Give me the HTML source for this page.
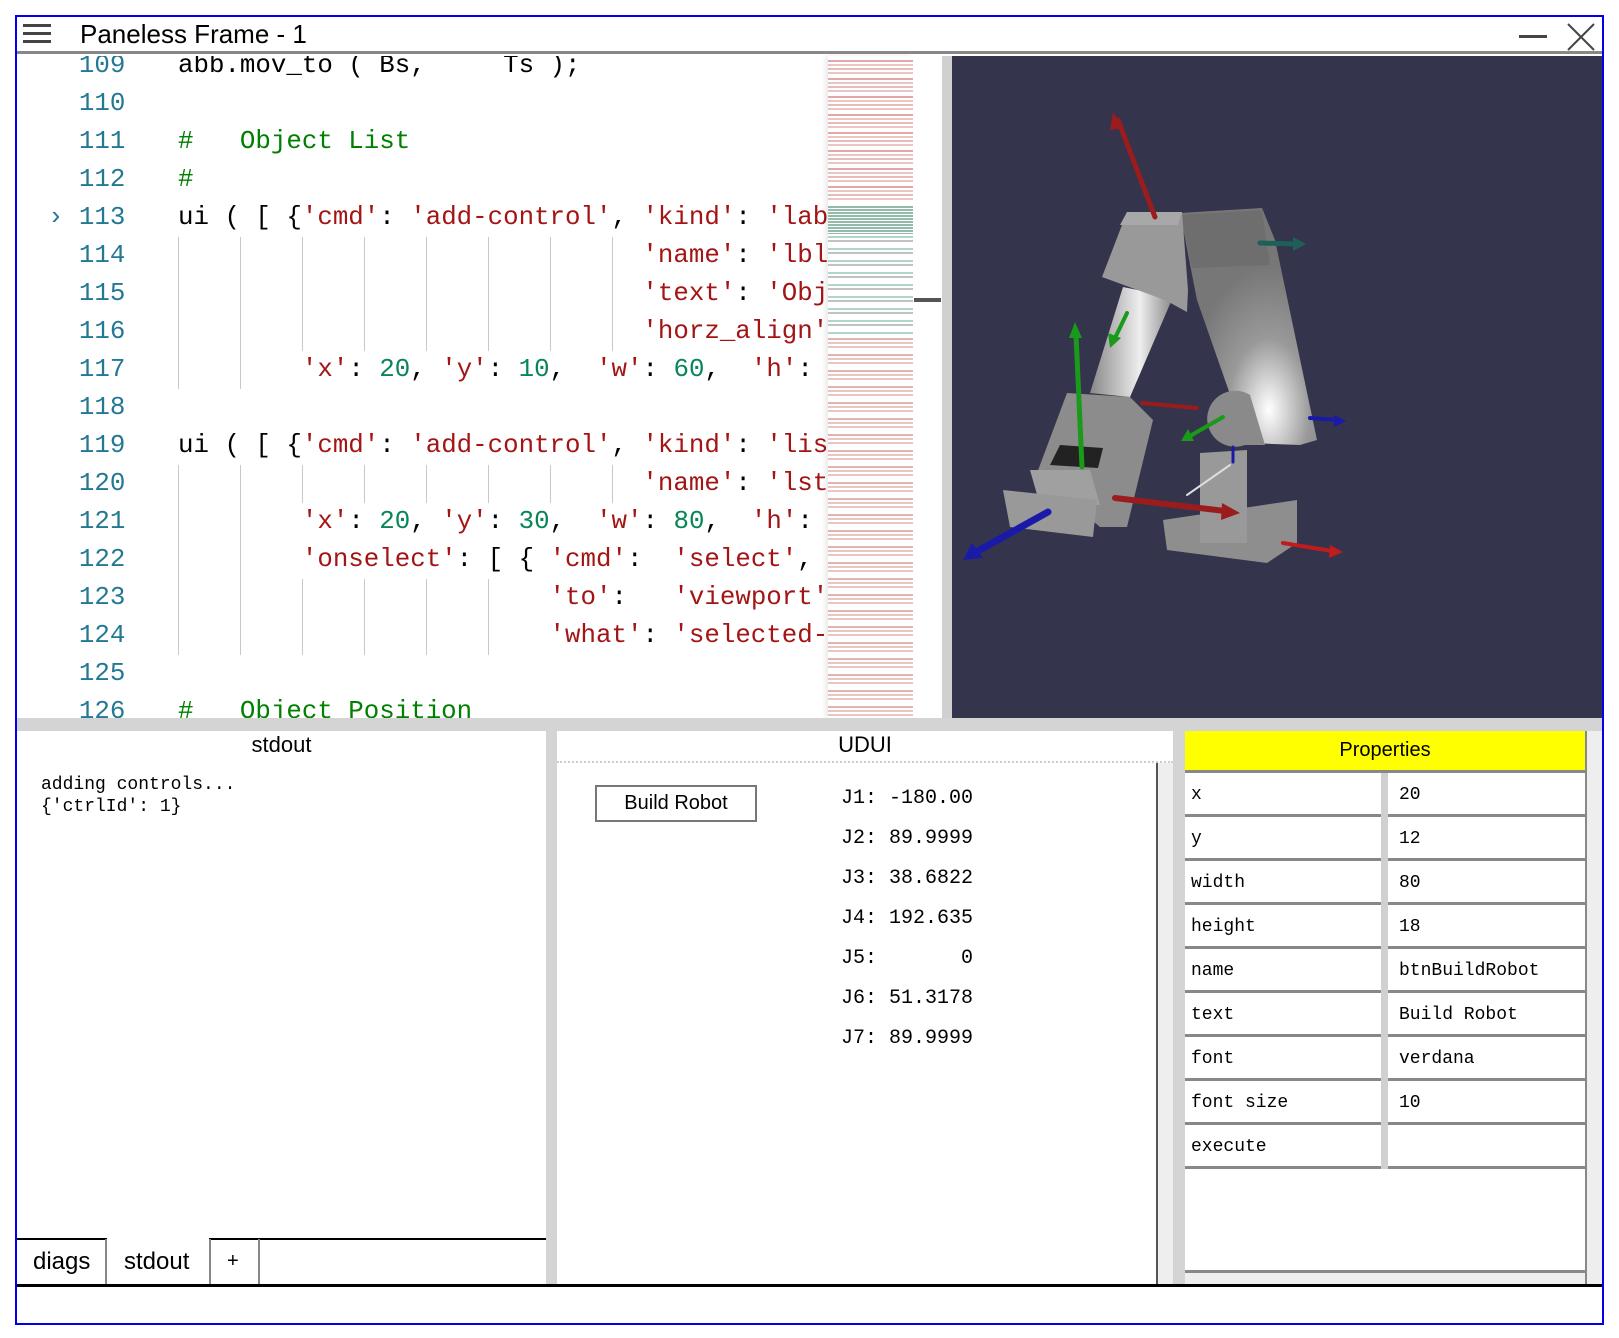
<!DOCTYPE html>
<html><head><meta charset="utf-8">
<style>
*{margin:0;padding:0;box-sizing:border-box}
body{width:1619px;height:1338px;background:#fff;position:relative;overflow:hidden;font-family:"Liberation Sans",sans-serif}
.a{position:absolute}
.mono{font-family:"Liberation Mono",monospace}
.code{position:absolute;left:0;width:811px;height:38px;font-family:"Liberation Mono",monospace;font-size:25.8px;white-space:pre;line-height:38px}
.code .ln{position:absolute;left:0;color:#237893}
.code .t{position:absolute;left:161px}
.s{color:#a31515}.n{color:#098658}.c{color:#008000}
.g{position:absolute;width:1px;background:#c8c8c8}
.prow{position:absolute;left:1185px;width:400px;height:44px;border-bottom:3px solid #888;font-family:"Liberation Mono",monospace;font-size:18px}
.prow span{position:absolute;top:12px}
.j{position:absolute;left:841px;font-family:"Liberation Mono",monospace;font-size:20px;white-space:pre}
</style></head><body>
<div class="a" style="left:15px;top:15px;width:1589px;height:1310px;border:2px solid #0000ee"></div>
<div class="a" style="left:17px;top:17px;width:1585px;height:37px;border-bottom:3px solid #888;background:#fff"></div>
<div class="a" style="left:23px;top:24px;width:28px;height:3px;background:#444"></div>
<div class="a" style="left:23px;top:32px;width:28px;height:3px;background:#444"></div>
<div class="a" style="left:23px;top:40px;width:28px;height:3px;background:#444"></div>
<div class="a" style="left:80px;top:19px;font-size:26px;color:#000">Paneless Frame - 1</div>
<div class="a" style="left:1519px;top:35px;width:28px;height:3px;background:#444"></div>
<svg class="a" style="left:1566px;top:22px" width="30" height="30"><path d="M2 2L28 28M28 2L2 28" stroke="#444" stroke-width="2"/></svg>

<div class="a" style="left:17px;top:56px;width:811px;height:662px;overflow:hidden;background:#fff">
 <div class="a" style="left:0;top:-9px;width:811px;height:700px">
  <div class="code" style="top:0"><span class="ln">    109</span><span class="t">abb.mov_to ( Bs,     Ts );</span></div>
  <div class="code" style="top:38px"><span class="ln">    110</span></div>
  <div class="code" style="top:76px"><span class="ln">    111</span><span class="t c">#   Object List</span></div>
  <div class="code" style="top:114px"><span class="ln">    112</span><span class="t c">#</span></div>
  <div class="code" style="top:152px"><span class="ln">  › 113</span><span class="t">ui ( [ {<span class="s">'cmd'</span>: <span class="s">'add-control'</span>, <span class="s">'kind'</span>: <span class="s">'label'</span></span></div>
  <div class="code" style="top:190px"><span class="ln">    114</span><span class="t">                              <span class="s">'name'</span>: <span class="s">'lblObj'</span></span></div>
  <div class="code" style="top:228px"><span class="ln">    115</span><span class="t">                              <span class="s">'text'</span>: <span class="s">'Obj'</span></span></div>
  <div class="code" style="top:266px"><span class="ln">    116</span><span class="t">                              <span class="s">'horz_align'</span></span></div>
  <div class="code" style="top:304px"><span class="ln">    117</span><span class="t">        <span class="s">'x'</span>: <span class="n">20</span>, <span class="s">'y'</span>: <span class="n">10</span>,  <span class="s">'w'</span>: <span class="n">60</span>,  <span class="s">'h'</span>: 1</span></div>
  <div class="code" style="top:342px"><span class="ln">    118</span></div>
  <div class="code" style="top:380px"><span class="ln">    119</span><span class="t">ui ( [ {<span class="s">'cmd'</span>: <span class="s">'add-control'</span>, <span class="s">'kind'</span>: <span class="s">'list'</span></span></div>
  <div class="code" style="top:418px"><span class="ln">    120</span><span class="t">                              <span class="s">'name'</span>: <span class="s">'lstObj'</span></span></div>
  <div class="code" style="top:456px"><span class="ln">    121</span><span class="t">        <span class="s">'x'</span>: <span class="n">20</span>, <span class="s">'y'</span>: <span class="n">30</span>,  <span class="s">'w'</span>: <span class="n">80</span>,  <span class="s">'h'</span>: 1</span></div>
  <div class="code" style="top:494px"><span class="ln">    122</span><span class="t">        <span class="s">'onselect'</span>: [ { <span class="s">'cmd'</span>:  <span class="s">'select'</span>,</span></div>
  <div class="code" style="top:532px"><span class="ln">    123</span><span class="t">                        <span class="s">'to'</span>:   <span class="s">'viewport'</span>,</span></div>
  <div class="code" style="top:570px"><span class="ln">    124</span><span class="t">                        <span class="s">'what'</span>: <span class="s">'selected-obj'</span></span></div>
  <div class="code" style="top:608px"><span class="ln">    125</span></div>
  <div class="code" style="top:646px"><span class="ln">    126</span><span class="t c">#   Object Position</span></div>
  <div class="g" style="left:161px;top:190px;height:152px"></div>
  <div class="g" style="left:223px;top:190px;height:152px"></div>
  <div class="g" style="left:285px;top:190px;height:114px"></div>
  <div class="g" style="left:347px;top:190px;height:114px"></div>
  <div class="g" style="left:409px;top:190px;height:114px"></div>
  <div class="g" style="left:471px;top:190px;height:114px"></div>
  <div class="g" style="left:533px;top:190px;height:114px"></div>
  <div class="g" style="left:595px;top:190px;height:114px"></div>
  <div class="g" style="left:161px;top:418px;height:190px"></div>
  <div class="g" style="left:223px;top:418px;height:190px"></div>
  <div class="g" style="left:285px;top:418px;height:38px"></div>
  <div class="g" style="left:347px;top:418px;height:38px"></div>
  <div class="g" style="left:409px;top:418px;height:38px"></div>
  <div class="g" style="left:471px;top:418px;height:38px"></div>
  <div class="g" style="left:533px;top:418px;height:38px"></div>
  <div class="g" style="left:595px;top:418px;height:38px"></div>
  <div class="g" style="left:285px;top:532px;height:76px"></div>
  <div class="g" style="left:347px;top:532px;height:76px"></div>
  <div class="g" style="left:409px;top:532px;height:76px"></div>
  <div class="g" style="left:471px;top:532px;height:76px"></div>
 </div>
</div>
<div class="a" style="left:828px;top:56px;width:85px;height:662px;background:#fff;box-shadow:-3px 0 4px rgba(0,0,0,0.08)">
 <div class="a" style="left:0;top:4px;width:85px;height:140px;background:repeating-linear-gradient(180deg,rgba(190,60,60,.45) 0 2px,transparent 2px 4px,rgba(190,60,60,.3) 4px 6px,transparent 6px 8px,rgba(190,60,60,.35) 8px 10px,transparent 10px 12px,rgba(190,60,60,.3) 12px 14px,transparent 14px 18px)"></div>
 <div class="a" style="left:0;top:150px;width:85px;height:28px;background:repeating-linear-gradient(180deg,rgba(40,120,90,.5) 0 2px,transparent 2px 3px)"></div>
 <div class="a" style="left:0;top:180px;width:85px;height:100px;background:repeating-linear-gradient(180deg,rgba(60,150,120,.4) 0 2px,transparent 2px 4px,rgba(80,80,80,.35) 4px 6px,transparent 6px 12px)"></div>
 <div class="a" style="left:0;top:282px;width:85px;height:380px;background:repeating-linear-gradient(180deg,rgba(190,60,60,.4) 0 2px,transparent 2px 4px,rgba(190,60,60,.3) 4px 6px,transparent 6px 8px,rgba(190,60,60,.3) 8px 10px,transparent 10px 16px)"></div>
</div>
<div class="a" style="left:913px;top:56px;width:29px;height:662px;background:#fff"></div>
<div class="a" style="left:914px;top:298px;width:27px;height:4px;background:#555"></div>
<div class="a" style="left:942px;top:56px;width:10px;height:662px;background:#d0d0d0"></div>
<svg class="a" style="left:952px;top:56px" width="650" height="662" viewBox="952 56 650 662">
 <defs>
  <linearGradient id="cyl" x1="0" y1="0" x2="1" y2="0"><stop offset="0" stop-color="#888"/><stop offset=".6" stop-color="#eee"/><stop offset="1" stop-color="#888"/></linearGradient>
  <radialGradient id="arm" cx=".65" cy=".85" r=".6"><stop offset="0" stop-color="#fff"/><stop offset=".5" stop-color="#999"/><stop offset="1" stop-color="#777"/></radialGradient>
 </defs>
 <rect x="952" y="56" width="650" height="662" fill="#34344c"/>
 <polygon points="1163,520 1297,500 1297,543 1267,563 1167,550" fill="#8e8e8e"/>
 <polygon points="1200,453 1247,450 1247,543 1200,543" fill="#999"/>
 <polygon points="1180,213 1262,208 1275,240 1317,440 1300,445 1247,443 1197,300" fill="url(#arm)"/>
 <polygon points="1180,215 1262,210 1270,265 1192,268" fill="#6e6e6e"/>
 <path d="M1250 395 A28 28 0 1 0 1245 445 L1265 445 Z" fill="#8a8a8a"/>
 <polygon points="1123,287 1173,297 1130,397 1090,393" fill="url(#cyl)"/>
 <polygon points="1127,212 1182,212 1188,290 1187,312 1165,300 1102,277" fill="#999"/>
 <polygon points="1127,212 1182,212 1178,225 1120,225" fill="#a8a8a8"/>
 <polygon points="1067,393 1130,397 1153,420 1127,527 1100,527 1037,473" fill="#8c8c8c"/>
 <polygon points="1060,445 1103,448 1098,468 1050,465" fill="#222"/>
 <polygon points="1030,470 1090,470 1100,505 1040,505" fill="#a0a0a0"/>
 <polygon points="1003,490 1097,500 1093,537 1010,527" fill="#999"/>
 <g stroke-linecap="round">
  <line x1="1155" y1="217" x2="1118" y2="120" stroke="#9b1c1c" stroke-width="5"/><polygon points="1113,112 1124,128 1110,130" fill="#9b1c1c"/>
  <line x1="1260" y1="243" x2="1295" y2="244" stroke="#1e6058" stroke-width="5"/><polygon points="1306,244 1293,237 1293,251" fill="#1e6058"/>
  <line x1="1082" y1="467" x2="1076" y2="335" stroke="#1a9a1a" stroke-width="5"/><polygon points="1075,322 1069,338 1082,338" fill="#1a9a1a"/>
  <line x1="1127" y1="313" x2="1115" y2="338" stroke="#1a9a1a" stroke-width="4"/><polygon points="1110,348 1108,333 1121,338" fill="#1a9a1a"/>
  <line x1="1142" y1="403" x2="1197" y2="408" stroke="#9b1c1c" stroke-width="4"/>
  <line x1="1223" y1="417" x2="1190" y2="436" stroke="#1a9a1a" stroke-width="4"/><polygon points="1181,441 1188,429 1194,441" fill="#1a9a1a"/>
  <line x1="1310" y1="418" x2="1337" y2="420" stroke="#1a1aa8" stroke-width="4"/><polygon points="1346,421 1334,415 1334,427" fill="#1a1aa8"/>
  <line x1="1233" y1="447" x2="1233" y2="462" stroke="#1a1aa8" stroke-width="3"/>
  <line x1="1230" y1="465" x2="1187" y2="495" stroke="#ddd" stroke-width="2"/>
  <line x1="1115" y1="498" x2="1225" y2="511" stroke="#9b1c1c" stroke-width="6"/><polygon points="1240,513 1222,503 1221,520" fill="#9b1c1c"/>
  <line x1="1048" y1="512" x2="976" y2="552" stroke="#1a1aa8" stroke-width="7"/><polygon points="963,560 972,543 983,558" fill="#1a1aa8"/>
  <line x1="1283" y1="543" x2="1332" y2="551" stroke="#c01c1c" stroke-width="4"/><polygon points="1343,552 1330,545 1329,558" fill="#c01c1c"/>
 </g>
</svg>
<div class="a" style="left:17px;top:718px;width:1585px;height:13px;background:#d4d4d4"></div>
<div class="a" style="left:17px;top:731px;width:529px;height:554px;background:#fff"></div>
<div class="a" style="left:17px;width:529px;text-align:center;font-size:22px;top:732px">stdout</div>
<div class="a mono" style="left:41px;top:774px;font-size:18px;line-height:22px;white-space:pre">adding controls...
{'ctrlId': 1}</div>
<div class="a" style="left:546px;top:731px;width:11px;height:554px;background:#d4d4d4"></div>
<div class="a" style="left:17px;top:1238px;width:529px;height:2px;background:#000"></div>
<div class="a" style="left:105px;top:1239px;width:2px;height:46px;background:#888"></div>
<div class="a" style="left:209px;top:1239px;width:2px;height:46px;background:#888"></div>
<div class="a" style="left:258px;top:1239px;width:2px;height:46px;background:#888"></div>
<div class="a" style="left:107px;top:1238px;width:102px;height:2px;background:#fff"></div>
<div class="a" style="left:33px;top:1248px;font-size:24px">diags</div>
<div class="a" style="left:124px;top:1248px;font-size:24px">stdout</div>
<div class="a" style="left:227px;top:1250px;font-size:20px">+</div>
<div class="a" style="left:557px;top:731px;width:616px;height:554px;background:#fff"></div>
<div class="a" style="left:557px;top:732px;width:616px;text-align:center;font-size:22px">UDUI</div>
<div class="a" style="left:557px;top:761px;width:616px;height:0;border-top:2px dotted #ccc"></div>
<div class="a" style="left:1156px;top:763px;width:17px;height:522px;background:#eee;border-left:2px solid #555"></div>
<div class="a" style="left:595px;top:785px;width:162px;height:37px;border:2px solid #777;font-size:20px;text-align:center;line-height:32px">Build Robot</div>
<div class="j" style="top:787px">J1: -180.00</div>
<div class="j" style="top:827px">J2: 89.9999</div>
<div class="j" style="top:867px">J3: 38.6822</div>
<div class="j" style="top:907px">J4: 192.635</div>
<div class="j" style="top:947px">J5:       0</div>
<div class="j" style="top:987px">J6: 51.3178</div>
<div class="j" style="top:1027px">J7: 89.9999</div>
<div class="a" style="left:1173px;top:731px;width:12px;height:554px;background:#d4d4d4"></div>
<div class="a" style="left:1185px;top:731px;width:400px;height:554px;background:#fff"></div>
<div class="a" style="left:1185px;top:731px;width:400px;height:42px;background:#ffff00;border-bottom:3px solid #888;text-align:center;font-size:20px;line-height:38px">Properties</div>
<div class="prow" style="top:773px"><span style="left:6px">x</span><span style="left:214px">20</span></div>
<div class="prow" style="top:817px"><span style="left:6px">y</span><span style="left:214px">12</span></div>
<div class="prow" style="top:861px"><span style="left:6px">width</span><span style="left:214px">80</span></div>
<div class="prow" style="top:905px"><span style="left:6px">height</span><span style="left:214px">18</span></div>
<div class="prow" style="top:949px"><span style="left:6px">name</span><span style="left:214px">btnBuildRobot</span></div>
<div class="prow" style="top:993px"><span style="left:6px">text</span><span style="left:214px">Build Robot</span></div>
<div class="prow" style="top:1037px"><span style="left:6px">font</span><span style="left:214px">verdana</span></div>
<div class="prow" style="top:1081px"><span style="left:6px">font size</span><span style="left:214px">10</span></div>
<div class="prow" style="top:1125px"><span style="left:6px">execute</span></div>
<div class="a" style="left:1381px;top:773px;width:7px;height:396px;background:#d0d0d0"></div>
<div class="a" style="left:1185px;top:1270px;width:400px;height:15px;background:#eee;border-top:3px solid #888"></div>
<div class="a" style="left:1585px;top:731px;width:17px;height:554px;background:#eee;border-left:2px solid #888"></div>
<div class="a" style="left:17px;top:1284px;width:1585px;height:3px;background:#000"></div>
</body></html>
